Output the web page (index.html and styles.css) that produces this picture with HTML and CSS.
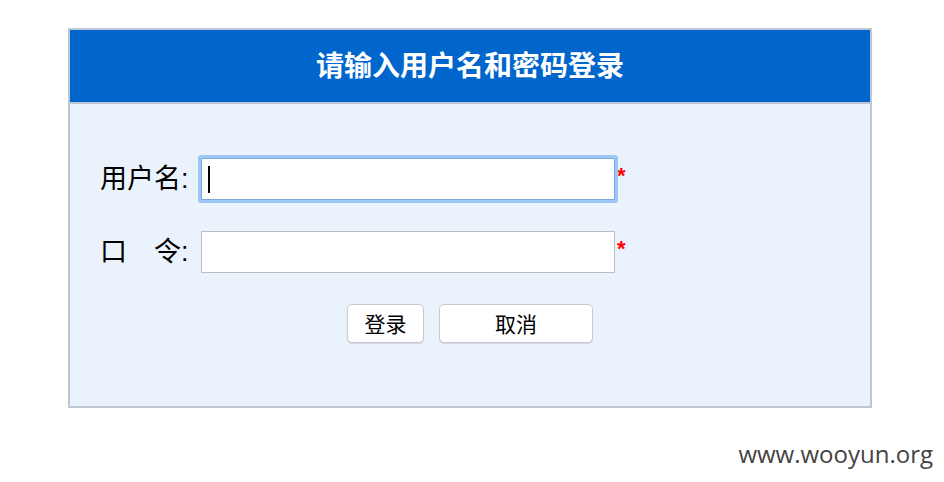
FILE: index.html
```html
<!DOCTYPE html>
<html lang="zh-CN">
<head>
<meta charset="utf-8">
<title>登录</title>
<link rel="stylesheet" href="styles.css">
</head>
<body>
<div class="login-box">
  <div class="login-head">请输入用户名和密码登录</div>
  <div class="login-body">
    <div class="form-row">
      <label class="form-label" for="user">用户名:</label>
      <div class="input-wrap">
        <input class="form-input is-focused" id="user" type="text">
        <span class="caret"></span>
      </div>
      <span class="required">*</span>
    </div>
    <div class="form-row">
      <label class="form-label" for="pass">口　令:</label>
      <div class="input-wrap">
        <input class="form-input" id="pass" type="password">
      </div>
      <span class="required">*</span>
    </div>
    <div class="form-actions">
      <button class="btn btn-login" type="button">登录</button>
      <button class="btn btn-cancel" type="button">取消</button>
    </div>
  </div>
</div>
<div class="watermark">www.wooyun.org</div>
</body>
</html>
```
FILE: styles.css
```css
html, body {
  margin: 0;
  padding: 0;
  background: #ffffff;
}

body {
  font-family: "Liberation Sans", "Noto Sans CJK SC", sans-serif;
  color: #000;
}

.login-box {
  margin: 28px 0 0 68px;
  width: 800px;
  border: 2px solid #bcc6d4;
  background: #eaf2fc;
}

.login-head {
  height: 72px;
  line-height: 68px;
  background: #0066cc;
  border-bottom: 2px solid #bcc6d4;
  color: #ffffff;
  text-align: center;
  font-family: "Noto Sans CJK SC", sans-serif;
  font-weight: 700;
  font-size: 28px;
}

.login-body {
  height: 302px;
  box-sizing: border-box;
  padding: 54px 0 0 30px;
}

.form-row {
  display: flex;
  align-items: center;
  height: 42px;
  margin-bottom: 31px;
}

.form-label {
  width: 101px;
  font-size: 27px;
  line-height: 42px;
}

.input-wrap {
  position: relative;
  width: 414px;
  height: 42px;
}

.form-input {
  display: block;
  box-sizing: border-box;
  width: 414px;
  height: 42px;
  margin: 0;
  padding: 0 8px;
  border: 1px solid #bdbdbd;
  border-radius: 0;
  background: #ffffff;
  outline: none;
  font-size: 22px;
}

.form-input.is-focused {
  border-color: #7ea6d8;
  border-radius: 1px;
  box-shadow: 0 0 0 3px #9dc7f7;
}

.caret {
  position: absolute;
  left: 7px;
  top: 8px;
  width: 2px;
  height: 27px;
  background: #000;
}

.required {
  align-self: flex-start;
  margin: 7px 0 0 2px;
  color: #ff0000;
  font-size: 22px;
  font-weight: 700;
  line-height: 1;
}

.form-actions {
  display: flex;
  justify-content: center;
  gap: 15px;
  margin-left: -30px;
}

.btn {
  height: 39px;
  box-sizing: border-box;
  padding: 0;
  border: 1px solid #c6c9ce;
  border-radius: 5px;
  background: #ffffff;
  box-shadow: 0 1px 1px rgba(0, 0, 0, 0.12);
  font-family: "Noto Sans CJK SC", sans-serif;
  font-size: 21px;
  line-height: 37px;
  color: #000;
}

.btn-login {
  width: 77px;
}

.btn-cancel {
  width: 154px;
}

.watermark {
  margin-top: 29px;
  padding-right: 11px;
  text-align: right;
  font-family: "Open Sans", sans-serif;
  font-size: 24px;
  color: #444444;
}
```
